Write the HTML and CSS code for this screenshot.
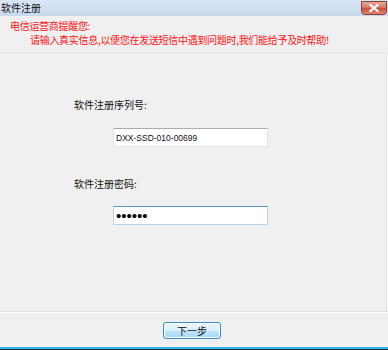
FILE: index.html
```
<!DOCTYPE html>
<html lang="zh-CN">
<head>
    <meta charset="utf-8">
    <title>软件注册</title>
    <link rel="stylesheet" href="styles.css">
</head>
<body>
    <div class="window">
        <div class="titlebar">
            <span class="title">软件注册</span>
            <button class="close" type="button">
                <svg width="10" height="8" viewBox="0 0 10 8">
                    <path d="M1.5 1 L8.5 7 M8.5 1 L1.5 7" stroke="#fff" stroke-width="2.2" stroke-linecap="square"/>
                </svg>
            </button>
        </div>

        <div class="notice">
            <div>电信运营商提醒您:</div>
            <div class="indent">请输入真实信息,以便您在发送短信中遇到问题时,我们能给予及时帮助!</div>
        </div>

        <div class="panel">
            <div class="label first">软件注册序列号:</div>
            <input class="field" type="text" value="DXX-SSD-010-00699" readonly>

            <div class="label second">软件注册密码:</div>
            <input class="field focus pwd" type="password" value="123456" readonly>
        </div>

        <div class="footer">
            <button class="next" type="button">下一步</button>
        </div>

        <div class="edge"></div>
    </div>
</body>
</html>
```

FILE: styles.css
```
* {
    margin: 0;
    padding: 0;
    box-sizing: border-box;
}

body {
    width: 388px;
    height: 350px;
    overflow: hidden;
    background: #f0f0f0;
    font-family: "Noto Sans CJK SC", "Liberation Sans", sans-serif;
    font-size: 10px;
}

.window {
    display: flex;
    flex-direction: column;
    height: 350px;
}

/* title bar */
.titlebar {
    height: 16px;
    display: flex;
    justify-content: space-between;
    align-items: flex-start;
    background: linear-gradient(#d9e6f4, #c8d9ed);
}

.title {
    padding-left: 1px;
    line-height: 16px;
    color: #111;
}

.close {
    width: 26px;
    height: 14px;
    margin: 1px 1px 0 0;
    border: 1px solid #8a3b33;
    border-radius: 0 0 4px 4px;
    background: linear-gradient(#e8aa9c, #d77a66 45%, #c8503c 55%, #dc8c7a);
    display: flex;
    justify-content: center;
    align-items: center;
}

/* notice */
.notice {
    height: 37px;
    padding: 3px 0 0 10px;
    color: #ff1010;
    line-height: 14px;
    letter-spacing: -0.3px;
}

.indent {
    padding-left: 20px;
}

/* main panel */
.panel {
    height: 259px;
    border-top: 1px solid #dce2e8;
    border-bottom: 1px solid #dde2e7;
    border-right: 1px solid #fcfcfc;
    box-shadow: inset 0 1px 0 #fafafa, 0 1px 0 #fbfbfb, inset -1px 0 0 #e2e2e2;
    display: flex;
    flex-direction: column;
    align-items: flex-start;
}

.label {
    margin-left: 74px;
    line-height: 14px;
    color: #111;
}

.label.first {
    margin-top: 44px;
}

.label.second {
    margin-top: 30px;
}

.field {
    display: block;
    width: 155px;
    height: 19px;
    margin: 16px 0 0 113px;
    padding: 0 2px;
    background: #fff;
    border: 1px solid #e2e6ea;
    border-top-color: #abadb3;
    font-family: "Liberation Sans", sans-serif;
    font-size: 8.5px;
    color: #111;
    outline: none;
}

.field.focus {
    margin-top: 15px;
    height: 19px;
    border-color: #b7d3ec;
    border-top-color: #5d95c8;
}

.pwd {
    font-size: 15px;
    color: #000;
}

/* footer */
.footer {
    flex: 1;
    display: flex;
    justify-content: center;
    align-items: flex-start;
    padding: 10px 4px 0 0;
}

.next {
    width: 58px;
    height: 17px;
    border: 1px solid #3c8cc4;
    border-radius: 3px;
    background: linear-gradient(#eaf6fd, #d9f0fc 50%, #bee6fd 51%, #a7d9f5);
    box-shadow: inset 0 0 0 1px #fcfdfe;
    font-family: "Noto Sans CJK SC", sans-serif;
    font-size: 10px;
    line-height: 14px;
    color: #111;
}

.edge {
    height: 3px;
    border-top: 2px solid #2cb5e6;
    background: #15323f;
}
```
